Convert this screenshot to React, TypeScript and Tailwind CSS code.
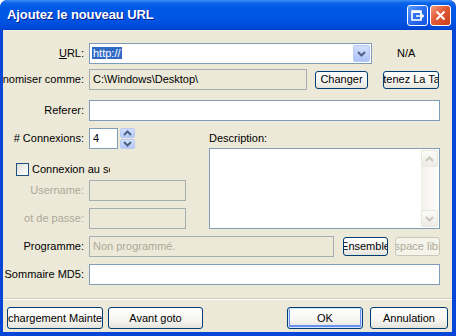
import type { ReactNode } from "react";

function Label({
  children,
  gray,
  className = "w-[81px]",
}: {
  children: ReactNode;
  gray?: boolean;
  className?: string;
}) {
  return (
    <div
      className={`shrink-0 flex justify-end items-center overflow-hidden whitespace-nowrap ${
        gray ? "text-[#aca899]" : "text-black"
      } ${className}`}
    >
      {children}
    </div>
  );
}

function Field({
  children,
  className = "",
  disabled,
}: {
  children?: ReactNode;
  className?: string;
  disabled?: boolean;
}) {
  return (
    <div
      className={`h-[21px] ml-[5px] shrink-0 flex items-center px-[3px] overflow-hidden whitespace-nowrap border ${
        disabled ? "border-[#a5acb2] bg-[#ece9d8]" : "border-[#7f9db9] bg-white"
      } ${className}`}
    >
      {children}
    </div>
  );
}

function XPButton({
  children,
  className = "",
  disabled,
  isDefault,
}: {
  children: ReactNode;
  className?: string;
  disabled?: boolean;
  isDefault?: boolean;
}) {
  return (
    <div
      className={`shrink-0 flex items-center justify-center overflow-hidden whitespace-nowrap rounded-[3px] border ${
        disabled
          ? "border-[#c9c7ba] bg-[#f5f4ea] text-[#aca899]"
          : "border-[#003c74] bg-[linear-gradient(to_bottom,#ffffff_0%,#f6f5f1_60%,#e3e2da_100%)] text-black"
      } ${
        isDefault ? "shadow-[inset_0_0_0_1px_#cee7ff,inset_0_-1px_0_2px_#6d8ff0]" : ""
      } ${className}`}
    >
      {children}
    </div>
  );
}

function Chevron({ up, color = "#4d6185" }: { up?: boolean; color?: string }) {
  return (
    <svg width="9" height="6" viewBox="0 0 9 6">
      <path
        d={up ? "M1 5 L4.5 1.5 L8 5" : "M1 1 L4.5 4.5 L8 1"}
        fill="none"
        stroke={color}
        strokeWidth="2"
      />
    </svg>
  );
}

function TitleBar() {
  return (
    <div className="h-[30px] shrink-0 flex items-center bg-[linear-gradient(to_bottom,#3d8ff6_0px,#0b63ea_3px,#0058e6_8px,#0054e3_20px,#004ad9_27px,#0040d0_30px)] rounded-t-[7px]">
      <div className="ml-[7px] flex-1 text-white font-bold text-[13px] tracking-[-0.1px] [text-shadow:1px_1px_0_#0a1d8a]">
        Ajoutez le nouveau URL
      </div>
      <div className="flex gap-[2px] mr-[5px]">
        <div className="w-[21px] h-[21px] rounded-[3px] border border-white bg-[linear-gradient(135deg,#5d9cfb_0%,#2a6cf0_50%,#1553dd_100%)] flex items-center justify-center">
          <svg width="13" height="11" viewBox="0 0 13 11">
            <rect x="1" y="1" width="9" height="9" fill="none" stroke="white" strokeWidth="1.6" />
            <rect x="1" y="1" width="9" height="2" fill="white" />
            <path d="M5 6 H11.5" stroke="white" strokeWidth="1.6" />
            <path d="M9.5 3.5 L12.5 6 L9.5 8.5" fill="none" stroke="white" strokeWidth="1.4" />
          </svg>
        </div>
        <div className="w-[21px] h-[21px] rounded-[3px] border border-white bg-[linear-gradient(135deg,#f09a7d_0%,#e35a36_45%,#c93d1d_100%)] flex items-center justify-center">
          <svg width="11" height="11" viewBox="0 0 11 11">
            <path d="M1.5 1.5 L9.5 9.5 M9.5 1.5 L1.5 9.5" stroke="white" strokeWidth="2" />
          </svg>
        </div>
      </div>
    </div>
  );
}

export default function App() {
  return (
    <div className="w-[456px] h-[336px] flex flex-col overflow-hidden rounded-t-[7px] bg-[#0846d8] font-['Liberation_Sans',Arial,sans-serif] text-[11px]">
      <TitleBar />
      <div className="flex-1 ml-[3px] mr-[4px] mb-[4px] bg-[#ece9d8] flex flex-col">
        {/* URL */}
        <div className="mt-[13px] h-[21px] flex items-center">
          <Label>
            <span className="underline">U</span>RL:
          </Label>
          <div className="ml-[5px] w-[283px] h-[21px] border border-[#7f9db9] bg-white flex items-center">
            <div className="flex-1 pl-[2px]">
              <span className="bg-[#316ac5] text-white px-[1px]">http://</span>
            </div>
            <div className="w-[17px] h-[17px] m-[1px] rounded-[2px] border border-[#b9c9f3] bg-[linear-gradient(to_bottom,#d2e0fd_0%,#bccffa_60%,#adc3f7_100%)] flex items-center justify-center">
              <Chevron />
            </div>
          </div>
          <div className="ml-[25px]">N/A</div>
        </div>

        {/* Economiser */}
        <div className="mt-[5px] h-[21px] flex items-center">
          <Label>Économiser comme:</Label>
          <Field disabled className="w-[218px]">
            C:\Windows\Desktop\
          </Field>
          <XPButton className="ml-[8px] w-[53px] h-[18px]">Changer</XPButton>
          <XPButton className="ml-[15px] w-[56px] h-[18px]">Obtenez La Taille</XPButton>
        </div>

        {/* Referer */}
        <div className="mt-[10px] h-[21px] flex items-center">
          <Label>Referer:</Label>
          <Field className="w-[351px]" />
        </div>

        {/* Middle */}
        <div className="mt-[7px] flex">
          <div className="w-[205px] shrink-0 flex flex-col">
            <div className="h-[21px] flex items-center">
              <Label># Connexions:</Label>
              <Field className="w-[29px]">4</Field>
              <div className="ml-[2px] w-[15px] flex flex-col gap-px">
                <div className="h-[10px] rounded-[2px] border border-[#b9c9f3] bg-[linear-gradient(to_bottom,#d2e0fd,#b4c8f8)] flex items-center justify-center">
                  <Chevron up />
                </div>
                <div className="h-[10px] rounded-[2px] border border-[#b9c9f3] bg-[linear-gradient(to_bottom,#d2e0fd,#b4c8f8)] flex items-center justify-center">
                  <Chevron />
                </div>
              </div>
            </div>
            <div className="mt-[13px] h-[14px] flex items-center">
              <div className="ml-[13px] w-[13px] h-[13px] border border-[#1c5180] bg-[linear-gradient(135deg,#dcdcd7_0%,#f4f4f2_60%,#ffffff_100%)]" />
              <div className="ml-[3px] w-[78px] overflow-hidden whitespace-nowrap">
                Connexion au serveur
              </div>
            </div>
            <div className="mt-[4px] h-[21px] flex items-center">
              <Label gray>Username:</Label>
              <Field disabled className="w-[97px]" />
            </div>
            <div className="mt-[7px] h-[21px] flex items-center">
              <Label gray className="ml-[21px] w-[60px]">
                Mot de passe:
              </Label>
              <Field disabled className="w-[97px]" />
            </div>
          </div>
          <div className="ml-[1px] w-[231px] flex flex-col">
            <div className="mt-[3px] h-[14px] leading-[14px]">Description:</div>
            <div className="mt-[3px] h-[81px] border border-[#7f9db9] bg-white flex justify-end">
              <div className="w-[17px] m-[1px] flex flex-col bg-[linear-gradient(to_right,#f3f1ec,#fefefb)]">
                <div className="h-[17px] rounded-[2px] border border-[#e8e6dd] bg-[linear-gradient(to_bottom,#fbfbf9,#ecebe6)] flex items-center justify-center">
                  <Chevron up color="#c9c7ba" />
                </div>
                <div className="flex-1" />
                <div className="h-[17px] rounded-[2px] border border-[#e8e6dd] bg-[linear-gradient(to_bottom,#fbfbf9,#ecebe6)] flex items-center justify-center">
                  <Chevron color="#c9c7ba" />
                </div>
              </div>
            </div>
          </div>
        </div>

        {/* Programme */}
        <div className="mt-[7px] h-[21px] flex items-center">
          <Label>Programme:</Label>
          <Field disabled className="w-[245px] text-[#aca899]">
            Non programmé.
          </Field>
          <XPButton className="ml-[9px] w-[45px] h-[19px]">Ensemble</XPButton>
          <XPButton disabled className="ml-[7px] w-[45px] h-[19px]">
            Espace libre
          </XPButton>
        </div>

        {/* MD5 */}
        <div className="mt-[7px] h-[21px] flex items-center">
          <Label>Sommaire MD5:</Label>
          <Field className="w-[351px]" />
        </div>

        <div className="mt-[13px] h-px bg-[#d0cdbd]" />
        <div className="h-px bg-white" />

        {/* Bottom buttons */}
        <div className="mt-[7px] h-[22px] flex items-center">
          <XPButton className="ml-[4px] w-[96px] h-[22px]">Téléchargement Maintenant</XPButton>
          <XPButton className="ml-[5px] w-[95px] h-[22px]">Avant goto</XPButton>
          <div className="flex-1" />
          <XPButton isDefault className="w-[76px] h-[22px]">
            OK
          </XPButton>
          <XPButton className="ml-[7px] mr-[4px] w-[78px] h-[22px]">Annulation</XPButton>
        </div>
      </div>
    </div>
  );
}
